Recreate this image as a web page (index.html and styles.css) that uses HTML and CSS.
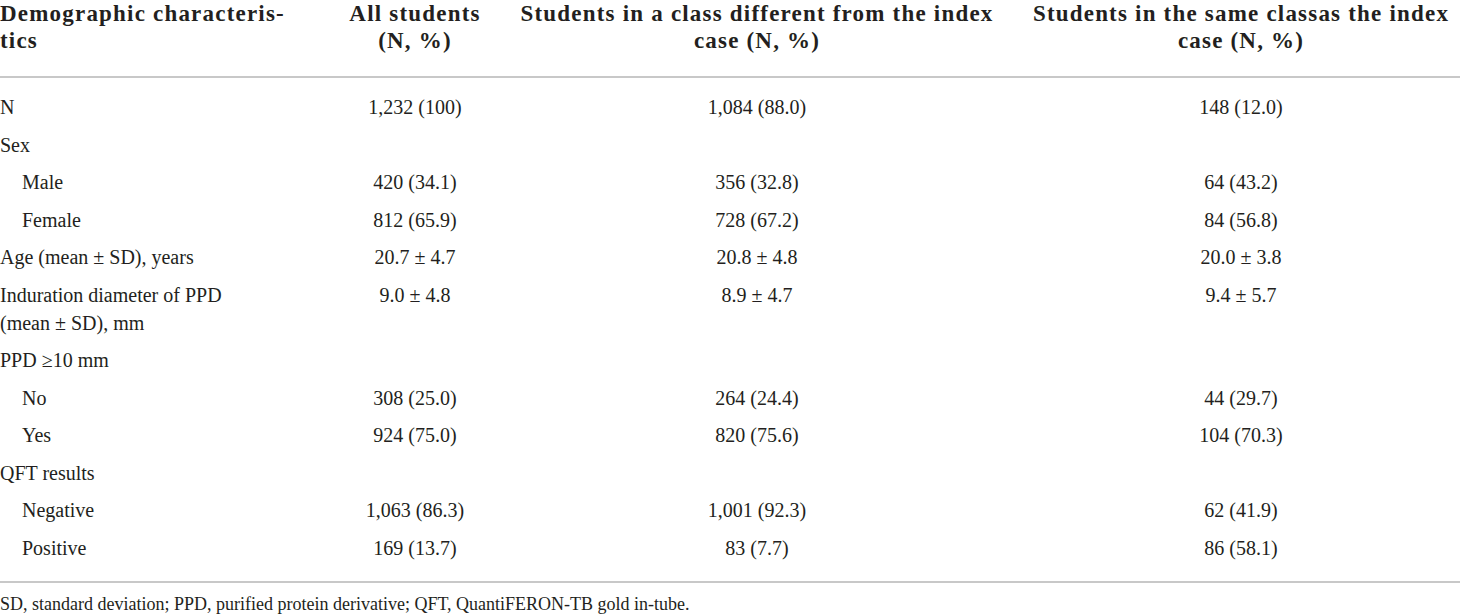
FILE: index.html
```html
<!DOCTYPE html>
<html lang="en">
<head>
  <meta charset="UTF-8">
  <meta name="viewport" content="width=device-width, initial-scale=1.0">
  <title>Demographic characteristics of students</title>
  <link rel="stylesheet" href="styles.css">
</head>
<body>

  <!-- Table -->
  <table class="data-table">
    <colgroup>
      <col class="col-label">
      <col class="col-all">
      <col class="col-diff">
      <col class="col-same">
    </colgroup>
    <thead>
      <tr>
        <th class="label">Demographic characteris-<br>tics</th>
        <th>All students<br>(N, %)</th>
        <th>Students in a class different from the index<br>case (N, %)</th>
        <th>Students in the same classas the index<br>case (N, %)</th>
      </tr>
    </thead>
    <tbody>
      <tr class="first">
        <td class="label">N</td>
        <td>1,232 (100)</td>
        <td>1,084 (88.0)</td>
        <td>148 (12.0)</td>
      </tr>
      <tr>
        <td class="label">Sex</td>
        <td></td>
        <td></td>
        <td></td>
      </tr>
      <tr>
        <td class="label sub">Male</td>
        <td>420 (34.1)</td>
        <td>356 (32.8)</td>
        <td>64 (43.2)</td>
      </tr>
      <tr>
        <td class="label sub">Female</td>
        <td>812 (65.9)</td>
        <td>728 (67.2)</td>
        <td>84 (56.8)</td>
      </tr>
      <tr>
        <td class="label">Age (mean ± SD), years</td>
        <td>20.7 ± 4.7</td>
        <td>20.8 ± 4.8</td>
        <td>20.0 ± 3.8</td>
      </tr>
      <tr>
        <td class="label">Induration diameter of PPD<br>(mean ± SD), mm</td>
        <td class="top">9.0 ± 4.8</td>
        <td class="top">8.9 ± 4.7</td>
        <td class="top">9.4 ± 5.7</td>
      </tr>
      <tr>
        <td class="label">PPD ≥10 mm</td>
        <td></td>
        <td></td>
        <td></td>
      </tr>
      <tr>
        <td class="label sub">No</td>
        <td>308 (25.0)</td>
        <td>264 (24.4)</td>
        <td>44 (29.7)</td>
      </tr>
      <tr>
        <td class="label sub">Yes</td>
        <td>924 (75.0)</td>
        <td>820 (75.6)</td>
        <td>104 (70.3)</td>
      </tr>
      <tr>
        <td class="label">QFT results</td>
        <td></td>
        <td></td>
        <td></td>
      </tr>
      <tr>
        <td class="label sub">Negative</td>
        <td>1,063 (86.3)</td>
        <td>1,001 (92.3)</td>
        <td>62 (41.9)</td>
      </tr>
      <tr class="last">
        <td class="label sub">Positive</td>
        <td>169 (13.7)</td>
        <td>83 (7.7)</td>
        <td>86 (58.1)</td>
      </tr>
    </tbody>
  </table>

  <!-- Footnote -->
  <p class="footnote">SD, standard deviation; PPD, purified protein derivative; QFT, QuantiFERON-TB gold in-tube.</p>

</body>
</html>
```

FILE: styles.css
```css
*{
  margin: 0;
  padding: 0;
  box-sizing: border-box;
}
body {
  font-family: "Liberation Serif", "Times New Roman", serif;
  background-color: #ffffff;
  color: #231f20;
}
.data-table {
  width: 1460px;
  border-collapse: collapse;
  table-layout: fixed;
}
.col-label {
  width: 338px;
}
.col-all {
  width: 154px;
}
.col-diff {
  width: 530px;
}
.col-same {
  width: 438px;
}
th {
  font-size: 23px;
  font-weight: bold;
  letter-spacing: 1.2px;
  line-height: 27px;
  text-align: center;
  vertical-align: top;
  white-space: nowrap;
  padding: 0 0 22px;
  border-bottom: 2px solid #c8c8c8;
}
th.label {
  text-align: left;
}
td {
  font-size: 20px;
  line-height: 28px;
  text-align: center;
  vertical-align: middle;
  padding: 4.75px 0;
}
td.top {
  vertical-align: top;
}
.label {
  text-align: left;
}
.sub {
  padding-left: 22px;
}
tr.first td {
  padding-top: 15px;
}
tr.last td {
  padding-bottom: 19px;
  border-bottom: 2px solid #c8c8c8;
}
.footnote {
  font-size: 18px;
  line-height: 24px;
  padding-top: 9px;
}
```
